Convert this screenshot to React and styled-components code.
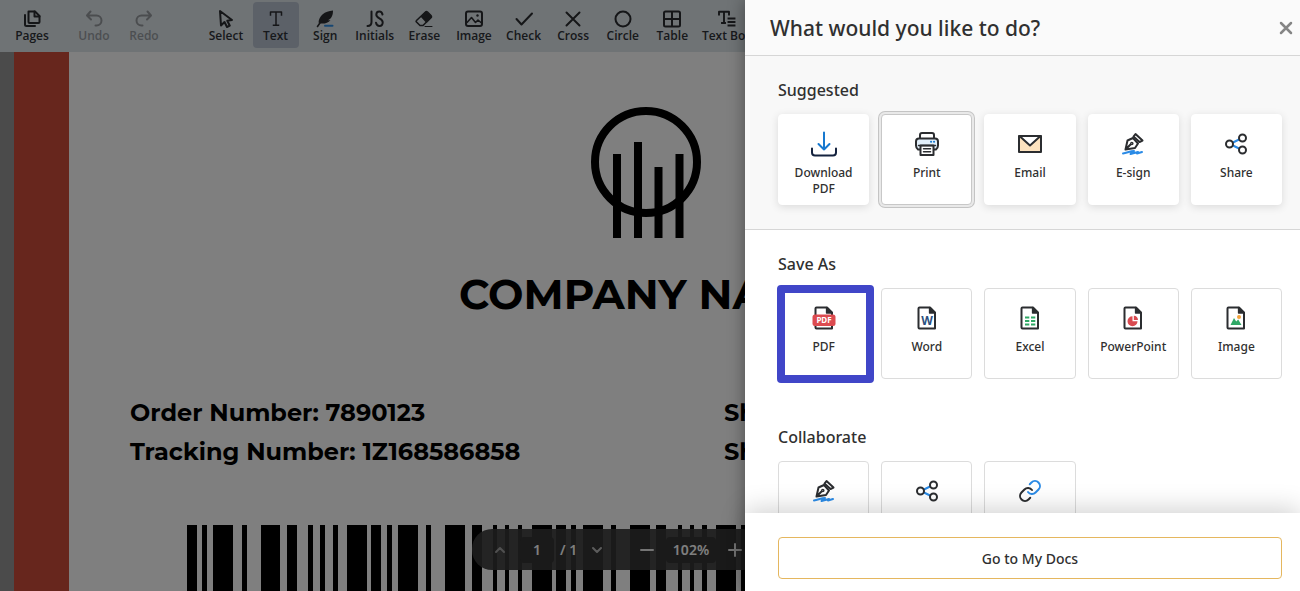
import React from 'react';
import styled, { createGlobalStyle } from 'styled-components';

const Global = createGlobalStyle`
  * { box-sizing: border-box; }
  html, body, #root { margin: 0; height: 100%; }
  body { font-family: 'Noto Sans', sans-serif; color: #303030; overflow: hidden; }
  button, input { font: inherit; color: inherit; }
  h1, h2, p { margin: 0; }
`;

const Shell = styled.div`
  position: relative;
  height: 100vh;
  overflow: hidden;
`;

const Editor = styled.div`
  display: flex;
  flex-direction: column;
  height: 100%;
`;

const Toolbar = styled.header`
  display: flex;
  flex: none;
  height: 52px;
  padding: 2px 0 0 9px;
  background: #dfe6eb;
  overflow: hidden;
`;

const ToolGroup = styled.div`
  display: flex;
  flex: none;
  justify-content: space-between;
  width: ${(p) => p.$width}px;
  margin-right: ${(p) => p.$gap || 0}px;
`;

const Tool = styled.button`
  display: flex;
  flex: none;
  flex-direction: column;
  align-items: center;
  width: ${(p) => (p.$wide ? 56 : 46)}px;
  height: 46px;
  padding: 7px 0 0;
  border: 0;
  border-radius: 4px;
  background: ${(p) => (p.$active ? '#b8c2d1' : 'transparent')};
  font-family: 'Open Sans', sans-serif;
  font-size: 12px;
  font-weight: 600;
  line-height: 14px;
  white-space: nowrap;
  color: #2f3338;
  opacity: ${(p) => (p.$faded ? 0.4 : 1)};
  svg { display: block; flex: none; }
`;

const Desk = styled.main`
  display: flex;
  flex: 1;
  min-height: 0;
  padding-left: 14px;
  background: #969696;
`;

const Sheet = styled.article`
  flex: 1;
  border-left: 55px solid #cf4c3a;
  background: #fff;
  font-family: Montserrat, Inter, sans-serif;
  font-weight: 700;
  color: #000;
  overflow: hidden;
`;

const Logo = styled.svg`
  display: block;
  margin: 54px 0 0 520px;
`;

const Company = styled.h1`
  margin: 26px 0 0 390px;
  font-size: 42px;
  line-height: 56px;
  white-space: nowrap;
`;

const Details = styled.div`
  display: grid;
  grid-template-columns: 594px 1fr;
  margin: 71px 0 0 61px;
  font-size: 24px;
  line-height: 39px;
  white-space: nowrap;
`;

const Barcode = styled.svg`
  display: block;
  margin: 54px 0 0 118px;
`;

const Pager = styled.div`
  position: absolute;
  left: 472px;
  bottom: 21px;
  display: flex;
  align-items: center;
  height: 41px;
  padding: 0 20px;
  border-radius: 20px;
  background: rgba(58, 58, 58, 0.92);
  color: #fff;
  font-size: 14px;
  font-weight: 600;
`;

const PagerGroup = styled.div`
  display: flex;
  align-items: center;
  gap: ${(p) => p.$gap}px;
  margin-right: ${(p) => p.$after || 0}px;
`;

const PagerButton = styled.button`
  display: flex;
  padding: 0;
  border: 0;
  background: none;
`;

const PagerField = styled.input`
  width: ${(p) => p.$width}px;
  height: 26px;
  padding: 0;
  border: 0;
  border-radius: 4px;
  background: #343434;
  text-align: center;
`;

const PageCount = styled.span`
  width: 21px;
  white-space: nowrap;
`;

const Backdrop = styled.div`
  position: absolute;
  inset: 0;
  background: rgba(0, 0, 0, 0.5);
`;

const Panel = styled.aside`
  position: absolute;
  inset: 0 0 0 auto;
  display: flex;
  flex-direction: column;
  width: 555px;
  background: #fff;
  box-shadow: 0 0 16px rgba(0, 0, 0, 0.4);
`;

const PanelHead = styled.div`
  display: flex;
  flex: none;
  align-items: center;
  justify-content: space-between;
  height: 56px;
  padding: 0 6px 0 25px;
  border-bottom: 1px solid #d6d6d6;
  background: #fafafa;
`;

const PanelTitle = styled.h1`
  font-size: 21px;
  font-weight: 500;
  line-height: 28px;
`;

const CloseButton = styled.button`
  display: flex;
  padding: 0;
  border: 0;
  background: none;
`;

const PanelBody = styled.div`
  flex: 1;
  min-height: 0;
  overflow: hidden;
`;

const Section = styled.section`
  height: ${(p) => (p.$tinted ? 174 : 173)}px;
  padding: 22px 18px 0 33px;
  background: ${(p) => (p.$tinted ? '#f8f8f8' : '#fff')};
  border-bottom: 1px solid ${(p) => (p.$tinted ? '#d6d6d6' : 'transparent')};
`;

const SectionTitle = styled.h2`
  font-size: 16px;
  font-weight: 500;
  line-height: 24px;
`;

const Cards = styled.div`
  display: grid;
  grid-template-columns: repeat(5, 1fr);
  gap: 12px;
  margin-top: 12px;
`;

const Card = styled.button`
  position: relative;
  display: flex;
  flex-direction: column;
  align-items: center;
  gap: 8px;
  height: 91px;
  padding: 16px 0 0;
  border: 1px solid ${(p) => (p.$raised ? '#fff' : '#dcdcdc')};
  border-radius: 4px;
  background: #fff;
  box-shadow: ${(p) => (p.$raised ? '0 2px 8px rgba(0, 0, 0, 0.12)' : 'none')};
  font-size: 12px;
  font-weight: 500;
  line-height: 16px;
  ${(p) => p.$focused && 'border-color: #c8c8c8; box-shadow: 0 0 0 2px #e9e9e9, 0 0 0 3px #c4c4c4;'}
  ${(p) => p.$marked && `
    &::after {
      content: '';
      position: absolute;
      inset: -4px -6px -5px -2px;
      border: 8px solid #4046c8;
      border-radius: 4px;
    }
  `}
  svg { display: block; flex: none; }
`;

const CardLabel = styled.span`
  max-width: 70px;
`;

const PanelFoot = styled.div`
  position: relative;
  flex: none;
  padding: 24px 18px 12px 33px;
  background: #fff;
  box-shadow: 0 -4px 24px rgba(0, 0, 0, 0.18);
`;

const DocsButton = styled.button`
  display: block;
  width: 100%;
  height: 42px;
  padding: 0;
  border: 1px solid #e5b75f;
  border-radius: 4px;
  background: #fff;
  font-size: 14px;
  font-weight: 500;
`;

const Icon = ({ size = 26, children, sw = 2, ...rest }) => (
  <svg width={size} height={size} viewBox={`0 0 ${size} ${size}`} fill="none" stroke="#2b2d30" strokeWidth={sw} strokeLinecap="round" strokeLinejoin="round" aria-hidden="true" {...rest}>
    {children}
  </svg>
);

const toolIcons = {
  Pages: <><path d="M6.500 2.500h6.500l4.500 4.500v6q0 1-1 1h-9q-1 0-1-1z" /><path d="M12.500 2.500V7.500h5M3 6v9.500q0 1.500 1.500 1.500H13" /></>,
  Undo: <path d="M6.500 2.500 3 6.500l4 4M3.500 6.500h9a5 5 0 0 1 0 10h-1" />,
  Redo: <path d="m13.500 2.500 3.500 4-4 4M16.500 6.500h-9a5 5 0 0 0 0 10h1" />,
  Select: <path d="m4 2 1 14.500 3.500-3.500 2.500 5 2.800-1.300-2.500-5 4.700-.7z" />,
  Text: <path d="M4.500 6V3h11v3M10 3v13M7.500 16.300h5" strokeWidth="1.500" strokeLinecap="square" />,
  Sign: <><path d="M3.500 13.500C4 7 9.500 2 18 1.500c0 5-1.500 8-5 9.700h2.500C13 14 9.500 15 5.500 14.500z" fill="#2b2d30" stroke="none" /><path d="M2.500 17.500 7 11" strokeWidth="1.600" /><path d="M10 16.800h7.500" stroke="#2f8fe5" /></>,
  Initials: <><path d="M6.500 2.500V13q0 4-4 4" /><path d="M17.500 5.500Q17 2.500 14.300 2.500q-3 0-3 3.300c0 3.700 6.400 3.500 6.400 7.500 0 2.300-1.200 3.700-3.200 3.700q-3 0-3.500-3.300" /></>,
  Erase: <><path d="m2.500 11.500 9-8.500q1-.8 2 0l3.500 3.500q.8 1 0 2l-8 8H6l-3.500-3.500q-.8-.8 0-1.500z" strokeWidth="1.600" /><path d="m7.500 7.500 4.500-4.500 5.500 5-5 5z" fill="#2b2d30" strokeWidth="1.600" /><path d="M11 17.500h7" strokeWidth="1" /></>,
  Image: <><rect x="2" y="2.500" width="16" height="14.500" rx="2" /><path d="m3 13.500 4.500-5 4 5 2.500-2.500 3.500 3" strokeWidth="1.600" /><circle cx="13.500" cy="6.500" r="1.200" fill="#2b2d30" stroke="none" /></>,
  Check: <path d="m2.500 10 5 5.500L18 4.500" />,
  Cross: <path d="m3.500 3.500 13 13m0-13-13 13" />,
  Circle: <circle cx="10" cy="10" r="7.500" />,
  Table: <><rect x="2" y="2.500" width="16" height="15" rx="1.500" /><path d="M10 3v14M2.500 10h15" /></>,
  'Text Box': <path d="M2 5.500V2.800h10V5.500M7 3v11M5 14h3M11.500 9.500h6M11.500 13h6M11.500 16.500h6" strokeWidth="1.900" strokeLinecap="square" />,
};

const ToolButton = ({ name, ...rest }) => (
  <Tool {...rest}>
    <Icon size={20}>{toolIcons[name]}</Icon>
    {name}
  </Tool>
);

const FileIcon = ({ children }) => (
  <Icon>
    <path d="M5.500 2.500h10.500l5 5v16h-15.500q-1 0-1-1v-19q0-1 1-1z" />
    <path d="M15.500 2.500v5.500h5.500z" fill="#2b2d30" strokeWidth="1.300" />
    {children}
  </Icon>
);

const PenIcon = () => (
  <Icon>
    <path d="m5.500 18.500 2-9 5.500-2.500 5 5.500-3 4.500zM5.500 18.500l5-5" />
    <path d="m13.500 5.500 2-2.500 7 6.500-3 1.500z" />
    <circle cx="11.800" cy="12.500" r="1.100" strokeWidth="1.400" />
    <path d="M3 22.500c4-.5 7-2.500 11-2.500-1 1.300-3 2-3.500 3l7.500-2-1 1.500 5-1.500" stroke="#2b8be6" />
  </Icon>
);

const ShareIcon = () => (
  <Icon>
    <path d="m10 11.500 6-3M10 14.500l6 3" stroke="#2b8be6" />
    <circle cx="6.500" cy="13" r="3.500" /><circle cx="19.500" cy="7" r="3.500" /><circle cx="19.500" cy="19" r="3.500" />
  </Icon>
);

const cardIcons = {
  download: <Icon><path d="M13 1.500v17m-5.500-5.500 5.500 5.500 5.500-5.500" stroke="#1678cf" /><path d="M1 17.500v4q0 3 3 3h18q3 0 3-3v-4" stroke="#15233f" /></Icon>,
  print: <Icon><path d="M6 7.500V4q0-2 2-2h10q2 0 2 2v3.500" /><path d="M6 18.500H4q-2-1.500-2-4v-4q0-3 3-3h16q3 0 3 3v4q0 2.500-2 4h-2" fill="#e2effa" /><path d="M6.500 14.500h13v9.500h-13z" fill="#fff" /><path d="M4.500 14.500h17M9.500 17.700h7M9.500 20.700h7" strokeWidth="1.500" /><path d="M17 10.700h.1M20 10.700h.1" stroke="#1678cf" /></Icon>,
  email: <Icon><path d="M2 5h22v16H2z" fill="#fde3bf" /><path d="m2.500 5 10.500 9.500L23.500 5z" fill="#fff" /></Icon>,
  esign: <PenIcon />,
  share: <ShareIcon />,
  pdf: <FileIcon><rect x="1.500" y="9.500" width="23" height="11.500" rx="2.500" fill="#dc4b50" stroke="none" /><text x="13" y="18.300" textAnchor="middle" fontFamily="Noto Sans" fontSize="8" fontWeight="700" fill="#fff" stroke="none">PDF</text></FileIcon>,
  word: <FileIcon><text x="13" y="20" textAnchor="middle" fontFamily="Noto Sans" fontSize="12" fontWeight="700" fill="#2b5080" stroke="none">W</text></FileIcon>,
  excel: <FileIcon><path d="M8 12.500h4.300M14 12.500h4.300M8 16h4.300M14 16h4.300M8 19.500h4.300M14 19.500h4.300" stroke="#2fa866" strokeLinecap="butt" /></FileIcon>,
  powerpoint: <FileIcon><path d="M12.500 11.200v5H17.500a5 5 0 1 1-5-5z" fill="#d94a50" stroke="none" /><path d="M13.800 10.700a4.500 4.500 0 0 1 4.200 4.200h-4.200z" fill="#d94a50" stroke="none" /></FileIcon>,
  image: <FileIcon><path d="m7.500 20 3.500-7 2.200 3.500 2-2 3.300 5.500z" fill="#2fa866" stroke="none" /><circle cx="16" cy="12" r="2" fill="#f2a33c" stroke="none" /></FileIcon>,
  link: <Icon><g transform="translate(1 1)"><path d="M10 13a5 5 0 0 0 7.540.540l3-3a5 5 0 0 0-7.070-7.070l-1.720 1.710" stroke="#2b8be6" /><path d="M14 11a5 5 0 0 0-7.540-.540l-3 3a5 5 0 0 0 7.070 7.070l1.710-1.710" /></g></Icon>,
};

const barRuns = [
  [187, 10], [202, 5], [213, 20], [242, 5], [261, 19], [287, 10], [308, 5], [320, 5], [333, 5], [347, 20], [371, 10], [387, 5], [398, 20], [426, 5], [445, 20],
  [472, 10], [493, 4], [505, 4], [518, 4], [532, 20], [556, 10], [571, 5], [583, 20], [611, 5], [630, 20], [656, 10], [678, 4], [690, 4], [702, 5], [716, 20], [741, 10],
];

const tools = ['Select', 'Text', 'Sign', 'Initials', 'Erase', 'Image', 'Check', 'Cross', 'Circle', 'Table', 'Text Box'];

const sections = [
  { title: 'Suggested', tinted: true, cards: [['download', 'Download PDF'], ['print', 'Print'], ['email', 'Email'], ['esign', 'E-sign'], ['share', 'Share']] },
  { title: 'Save As', cards: [['pdf', 'PDF'], ['word', 'Word'], ['excel', 'Excel'], ['powerpoint', 'PowerPoint'], ['image', 'Image']] },
  { title: 'Collaborate', iconOnly: true, cards: [['esign', 'E-sign'], ['share', 'Share'], ['link', 'Link']] },
];

export default function App() {
  return (
    <Shell>
      <Global />
      <Editor>
        <Toolbar>
          <ToolGroup $width={46} $gap={16}><ToolButton name="Pages" /></ToolGroup>
          <ToolGroup $width={96} $gap={36}><ToolButton name="Undo" $faded /><ToolButton name="Redo" $faded /></ToolGroup>
          <ToolGroup $width={552}>
            {tools.map((t) => <ToolButton key={t} name={t} $active={t === 'Text'} $wide={t === 'Text Box'} />)}
          </ToolGroup>
        </Toolbar>
        <Desk>
          <Sheet>
            <Logo width="114" height="134" viewBox="0 0 114 134" fill="none" stroke="#000" strokeWidth="8">
              <circle cx="57" cy="56" r="51" />
              <path d="M28 48v84M49 36v96M69.500 61v71M90.500 48v84" />
            </Logo>
            <Company>COMPANY NAME</Company>
            <Details>
              <p>Order Number: 7890123</p><p>Ship</p>
              <p>Tracking Number: 1Z168586858</p><p>Ship</p>
            </Details>
            <Barcode width="620" height="120" viewBox="187 0 620 120">
              {barRuns.map(([x, w]) => <rect key={x} x={x} width={w} height="120" />)}
            </Barcode>
          </Sheet>
        </Desk>
      </Editor>
      <Pager>
        <PagerGroup $gap={12} $after={6}>
          <PagerButton aria-label="Previous page"><Icon size={16} stroke="#a0a0a0"><path d="m4 10 4-4 4 4" /></Icon></PagerButton>
          <PagerField aria-label="Page" defaultValue="1" $width={34} />
        </PagerGroup>
        <PagerGroup $gap={8} $after={34}>
          <PageCount>/ 1</PageCount>
          <PagerButton aria-label="Next page"><Icon size={16} stroke="#b8b8b8"><path d="m4 6 4 4 4-4" /></Icon></PagerButton>
        </PagerGroup>
        <PagerGroup $gap={11}>
          <PagerButton aria-label="Zoom out"><Icon size={16} stroke="#e8e8e8"><path d="M2 8h12" /></Icon></PagerButton>
          <PagerField aria-label="Zoom" defaultValue="102%" $width={50} />
          <PagerButton aria-label="Zoom in"><Icon size={16} stroke="#e8e8e8"><path d="M2 8h12M8 2v12" /></Icon></PagerButton>
        </PagerGroup>
      </Pager>
      <Backdrop />
      <Panel>
        <PanelHead>
          <PanelTitle>What would you like to do?</PanelTitle>
          <CloseButton aria-label="Close"><Icon size={16} sw={2.5} stroke="#858585"><path d="m3 3 10 10M13 3 3 13" /></Icon></CloseButton>
        </PanelHead>
        <PanelBody>
          {sections.map((s) => (
            <Section key={s.title} $tinted={s.tinted}>
              <SectionTitle>{s.title}</SectionTitle>
              <Cards>
                {s.cards.map(([icon, label]) => (
                  <Card key={label} $raised={s.tinted} $focused={icon === 'print'} $marked={icon === 'pdf'} aria-label={s.iconOnly ? label : undefined}>
                    {cardIcons[icon]}
                    {!s.iconOnly && <CardLabel>{label}</CardLabel>}
                  </Card>
                ))}
              </Cards>
            </Section>
          ))}
        </PanelBody>
        <PanelFoot><DocsButton>Go to My Docs</DocsButton></PanelFoot>
      </Panel>
    </Shell>
  );
}
